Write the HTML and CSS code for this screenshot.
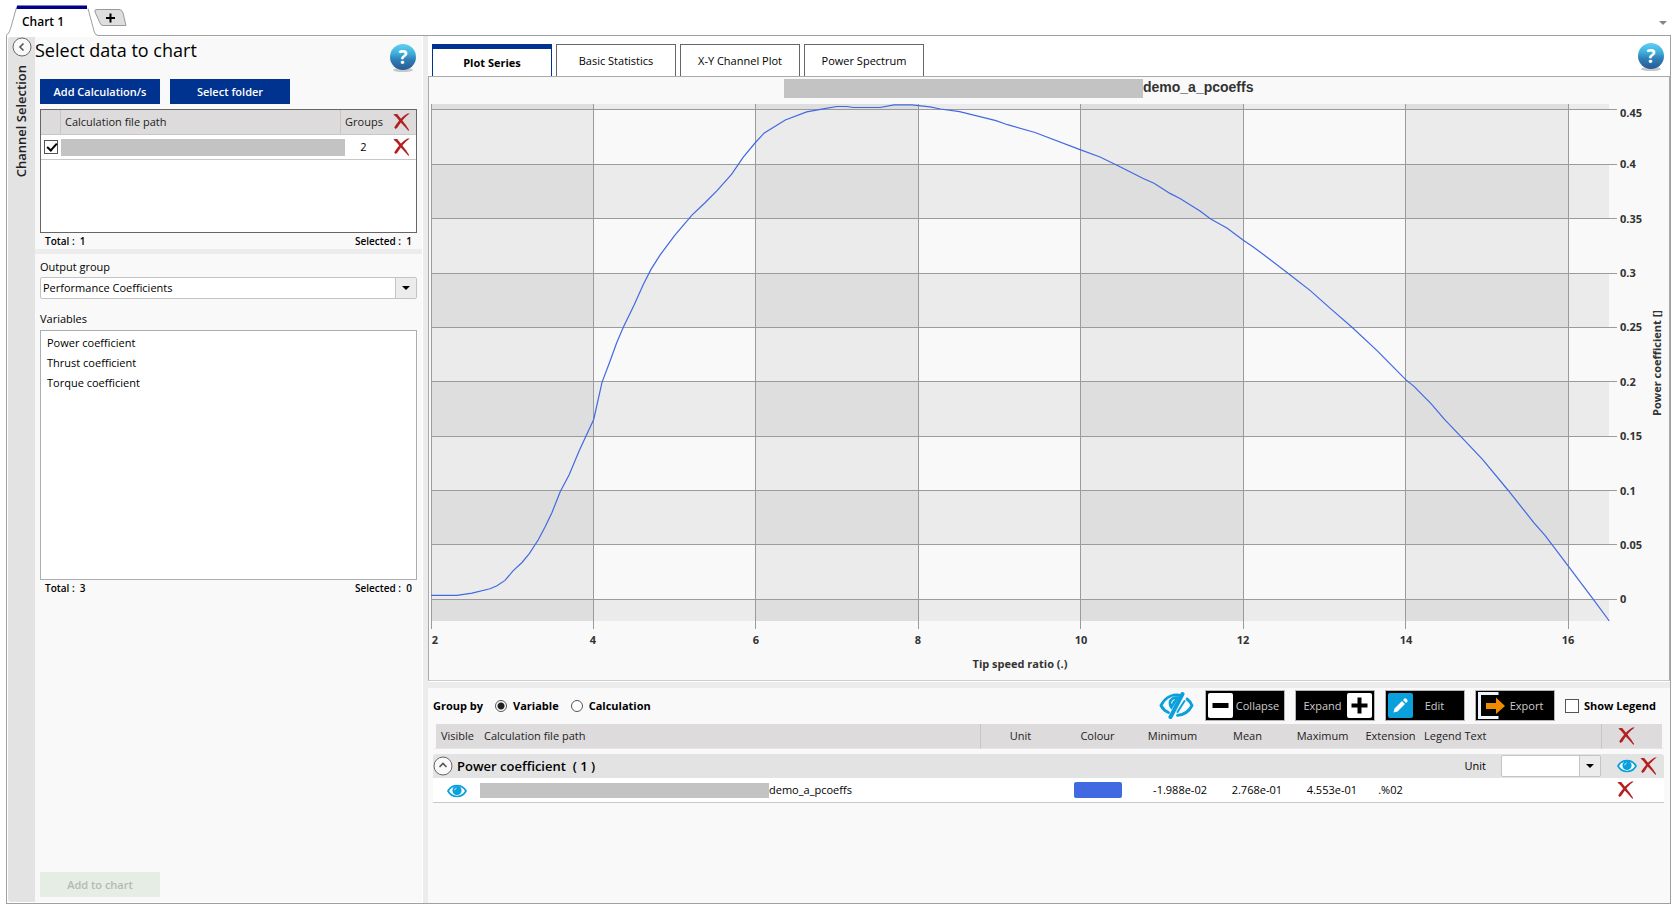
FILE: index.html
```html
<!DOCTYPE html>
<html lang="en">
<head>
<meta charset="utf-8">
<title>Chart 1</title>
<link rel="stylesheet" href="styles.css">
</head>
<body>
<svg class="defs" width="0" height="0" aria-hidden="true">
  <defs>
    <linearGradient id="helpFill" x1="0" y1="0" x2="0" y2="1">
      <stop offset="0" stop-color="#5fd0f3"/><stop offset=".35" stop-color="#3fb0dc"/>
      <stop offset=".6" stop-color="#2f7fb8"/><stop offset="1" stop-color="#285a90"/>
    </linearGradient>
    <symbol id="help" viewBox="0 0 28 28">
      <ellipse cx="14" cy="26" rx="10" ry="2" fill="#c4c8cc"/>
      <circle cx="14" cy="13" r="13" fill="url(#helpFill)"/>
      <text x="14" y="20" class="help-mark">?</text>
    </symbol>
    <symbol id="cross" viewBox="0 0 17 18">
      <path d="M.3 1.6 2.2.9 4.2 1 9 7c3 3.700 5 6.600 7 9.700l-.5 1.300C12.500 14.500 8.600 10.500 6 7.500 4 5 2.400 3 .3 1.600Z" fill="#b3201f"/>
      <path d="M16.800.4C12.500 3.500 8.300 8 4.300 14.800L2.600 16 1.200 14.500C5 8.500 10 3 14.700.6Z" fill="#b3201f"/>
    </symbol>
    <symbol id="eye" viewBox="0 0 20 14">
      <path d="M1 7C5-.3 15-.3 19 7 15 14.300 5 14.300 1 7Z" fill="#fff" stroke="#0aa0dc" stroke-width="1.700"/>
      <circle cx="10" cy="6.500" r="4.600" fill="#0aa0dc"/>
      <path d="M7.600 6.300A2.600 2.600 0 0 1 9.600 4" fill="none" stroke="#bfe8f8" stroke-width="1"/>
    </symbol>
    <symbol id="caret" viewBox="0 0 8 4"><path d="M0 0h8L4 4Z" fill="#000"/></symbol>
  </defs>
</svg>

<nav class="doc-tabs" aria-label="Charts">
  <button class="doc-tab" type="button">
    <svg width="92" height="31" viewBox="0 0 92 31" aria-hidden="true">
      <path d="M0 30.500C3 29 4 25 5 22L10.500 2.500Q11 .5 12.500 .5H79.500Q81 .5 82 3.500L88 26Q89 30.500 92 30.500V31H0Z" fill="#fff"/>
      <path d="M0 30.500C3 29 4 25 5 22L10.500 2.500M82 3.500L88 26Q89 30.500 92 30.500" fill="none" stroke="#a0a0a0"/>
      <path d="M11 .5H81V4H10.500Z" fill="#00008b"/>
    </svg>
    <span>Chart 1</span>
  </button>
  <button class="add-tab" type="button" aria-label="Add chart">
    <svg width="33" height="17" viewBox="0 0 33 17" aria-hidden="true">
      <path d="M3 .5H25Q28 .5 29 4L32 16.500H9Q7 16.500 6 14L1 3Q0 .5 3 .5Z" fill="#dedede" stroke="#999"/>
      <path d="M12 9H21M16.500 4.500V13.500" stroke="#000" stroke-width="2"/>
    </svg>
  </button>
  <button class="tab-list" type="button" aria-label="List charts">
    <svg width="8" height="4" viewBox="0 0 8 4" aria-hidden="true"><path d="M0 0h8L4 4Z" fill="#858585"/></svg>
  </button>
</nav>

<main class="frame">
  <aside class="rail">
    <button class="round" type="button" aria-label="Collapse channel selection">
      <svg width="20" height="20" viewBox="0 0 20 20" aria-hidden="true"><circle cx="10" cy="10" r="9" fill="#f9f9f9" stroke="#666"/><path d="M11.500 6.500 8 10l3.500 3.500" fill="none" stroke="#555" stroke-width="1.600"/></svg>
    </button>
    <span class="rail-label">Channel Selection</span>
  </aside>

  <section class="selection">
    <div class="files">
      <header class="files-head">
        <h1>Select data to chart</h1>
        <button class="help" type="button" aria-label="Help"><svg width="28" height="28"><use href="#help"/></svg></button>
      </header>
      <div class="actions">
        <button class="primary" type="button">Add Calculation/s</button>
        <button class="primary" type="button">Select folder</button>
      </div>
      <div class="file-box">
        <table class="file-table">
          <colgroup><col class="c-check"><col><col class="c-groups"><col class="c-del"></colgroup>
          <thead><tr>
            <th></th><th class="sep">Calculation file path</th><th class="sep mid">Groups</th>
            <th class="mid"><button class="icon" type="button" aria-label="Remove all"><svg width="17" height="18"><use href="#cross"/></svg></button></th>
          </tr></thead>
          <tbody><tr>
            <td class="mid"><input class="tick" type="checkbox" checked aria-label="Select file"></td>
            <td class="path"><div class="mask mask-file"></div></td><td class="mid">2</td>
            <td class="mid"><button class="icon" type="button" aria-label="Remove file"><svg width="17" height="18"><use href="#cross"/></svg></button></td>
          </tr></tbody>
        </table>
      </div>
      <div class="totals"><span>Total :&nbsp; 1</span><span>Selected :&nbsp; 1</span></div>
    </div>
    <div class="split-h"></div>
    <div class="vars">
      <label for="group">Output group</label>
      <div class="combo combo-wide">
        <select id="group"><option>Performance Coefficients</option></select>
        <span class="combo-arrow"><svg width="8" height="4"><use href="#caret"/></svg></span>
      </div>
      <h2>Variables</h2>
      <ul class="var-list">
        <li>Power coefficient</li><li>Thrust coefficient</li><li>Torque coefficient</li>
      </ul>
      <div class="totals"><span>Total :&nbsp; 3</span><span>Selected :&nbsp; 0</span></div>
      <button class="add" type="button" disabled>Add to chart</button>
    </div>
  </section>
  <div class="split-v"></div>

  <section class="work">
    <header class="plot-tabs">
      <button class="plot-tab active" type="button">Plot Series</button>
      <button class="plot-tab" type="button">Basic Statistics</button>
      <button class="plot-tab" type="button">X-Y Channel Plot</button>
      <button class="plot-tab" type="button">Power Spectrum</button>
      <button class="help" type="button" aria-label="Help"><svg width="28" height="28"><use href="#help"/></svg></button>
    </header>

    <div class="chart">
      <svg viewBox="429 77 1240 603" role="img" aria-label="Power coefficient against tip speed ratio">
        <g class="band">
          <path d="M431 104H593V621H431ZM756 104H918V621H756ZM1080 104H1243V621H1080ZM1405 104H1568V621H1405Z"/>
          <path d="M431 104H1609V109H431ZM431 164H1609V218H431ZM431 273H1609V327H431ZM431 381H1609V436H431ZM431 490H1609V544H431ZM431 599H1609V621H431Z"/>
        </g>
        <path class="grid" d="M431.500 104V629M593.500 104V629M755.500 104V629M918.500 104V629M1080.500 104V629M1243.500 104V629M1405.500 104V629M1568.500 104V629M431 109.500H1617M431 164.500H1617M431 218.500H1617M431 273.500H1617M431 327.500H1617M431 381.500H1617M431 436.500H1617M431 490.500H1617M431 544.500H1617M431 599.500H1617"/>
        <polyline class="curve" points="431,595.3 457,595.3 472,593.2 490,588.8 497,585.8 505,580.4 513,570.9 522,562.5 529.3,553.7 538.3,539.8 545,527 552,512.4 560.3,491.5 569.3,474.6 579.3,450.6 593.7,419.5 602,382.3 610,361.3 616.7,342.8 623.3,327.2 634,305.2 643.3,284.6 651,269.4 660,255.2 674.7,235.3 689,218.7 691.7,215.3 705.3,202.5 717.3,190.3 731.7,174.1 743.3,157.2 755,143 764.3,132.9 785.3,120 806.7,111.9 823.3,108.9 836.7,106.5 846.7,106.5 853.3,107.5 880,107.5 894,104.8 911.7,104.8 930,106.8 940.5,109 959.6,111.7 996,120.7 1007.5,124.7 1035,132.5 1080,149.6 1100,157 1120,166.7 1142.7,178.2 1154,183.2 1170,193.4 1180,198.4 1200,210.9 1210.7,219 1227.3,228.2 1243.3,240.3 1253.3,247.1 1266.7,256.9 1288.3,273.5 1310,290.4 1331.7,309.6 1352.3,327.5 1377.3,350.9 1405.7,379.6 1414,386.4 1431,403.6 1444.3,419.2 1460,435.7 1482.7,459.7 1508.3,490.5 1534,522.9 1545,535.4 1568.3,566.2 1593.3,599.3 1609.3,621"/>
        <rect x="784" y="79" width="359" height="19" fill="#c3c3c3"/>
        <text class="title" x="1143" y="92">demo_a_pcoeffs</text>
        <g class="ticks">
          <text x="1620" y="117">0.45</text><text x="1620" y="168">0.4</text><text x="1620" y="223">0.35</text><text x="1620" y="277">0.3</text><text x="1620" y="331">0.25</text><text x="1620" y="386">0.2</text><text x="1620" y="440">0.15</text><text x="1620" y="495">0.1</text><text x="1620" y="549">0.05</text><text x="1620" y="603">0</text>
        </g>
        <g class="ticks mid-ticks">
          <text x="435" y="644">2</text><text x="593" y="644">4</text><text x="756" y="644">6</text><text x="918" y="644">8</text><text x="1081" y="644">10</text><text x="1243" y="644">12</text><text x="1406" y="644">14</text><text x="1568" y="644">16</text>
          <text x="1020" y="668">Tip speed ratio (.)</text>
          <text transform="translate(1661 363) rotate(-90)">Power coefficient []</text>
        </g>
      </svg>
    </div>
    <div class="split-h split-work"></div>

    <div class="series">
      <div class="toolbar">
        <fieldset class="group-by">
          <legend>Group by</legend>
          <label><input type="radio" name="by" checked>Variable</label>
          <label><input type="radio" name="by">Calculation</label>
        </fieldset>
        <button class="icon hide-all" type="button" aria-label="Toggle visibility">
          <svg width="35" height="27" viewBox="0 0 35 27" aria-hidden="true">
            <path d="M9.500 20.500C6 19 3.500 16.500 2 13.500 7 3.500 15.500 2 22 3.500" fill="none" stroke="#0aa0dc" stroke-width="2.800" stroke-linecap="round"/>
            <path d="M28 7C30.500 8.800 32 11 33 13.500 30 19.500 25 22.800 18.500 23.300" fill="none" stroke="#0aa0dc" stroke-width="2.800" stroke-linecap="round"/>
            <path d="M10 8.500C9 12 10 15.500 12.500 17.500L20.500 4.500C16 3.500 12 5 10 8.500Z" fill="#0aa0dc"/>
            <path d="M23.500 2 11.500 25" stroke="#0aa0dc" stroke-width="4" stroke-linecap="round"/>
            <path d="M25.500 9 18.500 20" stroke="#0aa0dc" stroke-width="2" stroke-linecap="round"/>
            <path d="M12.500 11.500Q13 8.500 15.500 7.500" fill="none" stroke="#d5f0fa" stroke-width="1.300"/>
          </svg>
        </button>
        <button class="tool" type="button">
          <svg width="25" height="25" viewBox="0 0 25 25" aria-hidden="true"><rect width="25" height="25" rx="2" fill="#fff"/><path d="M4.500 12.500H20.500" stroke="#000" stroke-width="5"/></svg>
          <span>Collapse</span>
        </button>
        <button class="tool" type="button">
          <span>Expand</span>
          <svg width="25" height="25" viewBox="0 0 25 25" aria-hidden="true"><rect width="25" height="25" rx="2" fill="#fff"/><path d="M4.500 12.500H20.500M12.500 4.500V20.500" stroke="#000" stroke-width="4"/></svg>
        </button>
        <button class="tool tool-short" type="button">
          <svg width="25" height="25" viewBox="0 0 25 25" aria-hidden="true"><rect width="25" height="25" rx="2" fill="#0aa0dc"/><path d="M5.500 19.500 6.500 15.500 14 8 17 11 9.500 18.500ZM15 7 16.500 5.500Q17.500 5 18.500 6L19.300 7Q20 7.800 19.500 8.500L18 10Z" fill="#fff"/></svg>
          <span>Edit</span>
        </button>
        <button class="tool tool-short" type="button">
          <svg width="29" height="27" viewBox="0 0 29 27" aria-hidden="true"><path d="M20.500 1.500H1.500V25.500H20.500" fill="none" stroke="#eef4ff" stroke-width="3"/><path d="M8 11H18V5.500L27 14 18 22V17H8Z" fill="#f08a00"/></svg>
          <span>Export</span>
        </button>
        <label class="legend-toggle"><input class="tick" type="checkbox">Show Legend</label>
      </div>

      <table class="series-table">
        <colgroup><col class="s-vis"><col><col class="s-unit"><col class="s-num"><col class="s-num"><col class="s-num"><col class="s-num"><col class="s-ext"><col class="s-leg"><col class="s-del"></colgroup>
        <thead><tr>
          <th class="first">Visible</th><th>Calculation file path</th><th class="sep mid">Unit</th><th class="mid">Colour</th><th class="mid">Minimum</th><th class="mid">Mean</th><th class="mid">Maximum</th><th class="mid">Extension</th><th>Legend Text</th>
          <th class="sep last"><button class="icon" type="button" aria-label="Remove all series"><svg width="17" height="18"><use href="#cross"/></svg></button></th>
        </tr></thead>
        <tbody>
          <tr class="group">
            <td colspan="8"><div class="group-name">
              <button class="round" type="button" aria-label="Collapse group"><svg width="20" height="20" viewBox="0 0 20 20" aria-hidden="true"><circle cx="10" cy="10" r="9" fill="#f9f9f9" stroke="#666"/><path d="M6.500 11 10 7.500l3.500 3.500" fill="none" stroke="#555" stroke-width="1.600"/></svg></button>
              <span>Power coefficient &nbsp;( 1 )</span></div></td>
            <td><div class="group-unit"><label for="unit">Unit</label>
              <div class="combo combo-unit"><select id="unit"><option></option></select><span class="combo-arrow"><svg width="8" height="4"><use href="#caret"/></svg></span></div></div></td>
            <td><div class="group-icons">
              <button class="icon" type="button" aria-label="Show group"><svg width="20" height="14"><use href="#eye"/></svg></button>
              <button class="icon" type="button" aria-label="Remove group"><svg width="17" height="18"><use href="#cross"/></svg></button></div></td>
          </tr>
          <tr class="row">
            <td class="mid"><button class="icon" type="button" aria-label="Show series"><svg width="20" height="14"><use href="#eye"/></svg></button></td>
            <td class="path"><div class="series-path"><span class="mask mask-series"></span>demo_a_pcoeffs</div></td>
            <td></td><td class="mid"><span class="swatch"></span></td>
            <td class="num">-1.988e-02</td><td class="num">2.768e-01</td><td class="num">4.553e-01</td><td class="mid">.%02</td><td></td>
            <td class="last"><button class="icon" type="button" aria-label="Remove series"><svg width="17" height="18"><use href="#cross"/></svg></button></td>
          </tr>
        </tbody>
      </table>
    </div>
  </section>
</main>
</body>
</html>
```

FILE: styles.css
```css
* { box-sizing: border-box; }

html { height: 100%; overflow: hidden; }

body {
  margin: 0;
  height: 100%;
  padding: 0 5px 8px 6px;
  display: flex;
  flex-direction: column;
  overflow: hidden;
  background: #fff;
  color: #000;
  font: 11px/16px "Open Sans", "Noto Sans", sans-serif;
}

button, input, select { font: inherit; color: inherit; margin: 0; }
button { border: 0; padding: 0; background: none; }
svg { display: block; flex: none; }
h1, h2, ul { margin: 0; padding: 0; list-style: none; font-weight: 400; }
.defs { position: absolute; top: 0; left: 0; }
.icon { display: inline-block; vertical-align: middle; }

/* document tabs */
.doc-tabs { display: flex; align-items: flex-start; height: 35px; padding-top: 5px; flex: none; }
.doc-tab { position: relative; width: 92px; height: 31px; z-index: 1; font-weight: 600; font-size: 12px; }
.doc-tab svg { position: absolute; inset: 0; }
.doc-tab span { position: relative; display: block; padding: 2px 18px 0 0; }
.add-tab { margin: 4px 0 0 -4px; }
.tab-list { margin: 16px 4px 0 auto; }

.frame {
  flex: 1;
  min-height: 0;
  display: flex;
  border: 1px solid #a0a0a0;
}

/* collapsed rail */
.rail {
  width: 27px;
  margin: 1px 0 1px 1px;
  background: #e3e3e3;
  border-radius: 3px 0 0 3px;
  display: flex;
  flex-direction: column;
  align-items: center;
  gap: 8px;
  flex: none;
}
.rail-label { writing-mode: vertical-rl; transform: rotate(180deg); margin-right: 2px; font-size: 13px; font-weight: 600; color: #222; }

/* selection panel */
.selection { width: 387px; margin: 1px 1px 1px 0; flex: none; display: flex; flex-direction: column; background: #f9f9f9; }
.files { padding: 0 5px; height: 212px; display: flex; flex-direction: column; }
.files-head { display: flex; justify-content: space-between; height: 42px; }
.files-head h1 { font-size: 18px; line-height: 26px; margin-left: -5px; }
.files-head .help { margin: 7px 0 0; }
.help { align-self: flex-start; }
.help-mark { font: 700 19px "Open Sans", sans-serif; fill: #fff; text-anchor: middle; }
.actions { display: flex; gap: 10px; margin-bottom: 5px; }
.primary { width: 120px; height: 25px; background: #003290; color: #fff; font-weight: 600; }
.file-box { flex: 1; border: 1px solid #666; background: #fff; }
.totals { display: flex; justify-content: space-between; padding: 0 5px; font-size: 10px; font-weight: 600; }

table { width: 100%; table-layout: fixed; border-collapse: separate; border-spacing: 0; }
th, td { padding: 0; font-weight: 400; text-align: left; white-space: nowrap; height: 25px; }
th { background: #dddbdc; border-bottom: 1px solid #c8c8c8; color: #222; }
.mid { text-align: center; }
.sep { border-left: 1px solid #c6c6c6; }
.mid svg, .tick { margin: auto; }

.file-table th.sep:not(.mid) { padding-left: 4px; }
.file-table td { border-bottom: 1px solid #c8c8c8; }
.c-check { width: 19px; }
.c-groups { width: 47px; }
.c-del { width: 29px; }
.mask { background: #c3c3c3; }
.mask-file { height: 17px; margin-right: -5px; margin-left: 1px; }

.tick {
  appearance: none;
  display: block;
  width: 14px;
  height: 14px;
  border: 1px solid #555;
  background: #fff;
  flex: none;
}
.tick:checked::before {
  content: "";
  display: block;
  width: 4px;
  height: 8px;
  margin: 0 0 0 4px;
  border: solid #000;
  border-width: 0 2px 2px 0;
  transform: rotate(42deg);
}

.split-h { height: 5px; background: #ececec; flex: none; }
.split-v { width: 5px; background: #ececec; flex: none; }

.vars { flex: 1; padding: 5px 5px; display: flex; flex-direction: column; }
.combo { position: relative; height: 22px; }
.combo select {
  appearance: none;
  width: 100%;
  height: 100%;
  padding: 0 24px 0 2px;
  border: 1px solid #c4c4c4;
  border-radius: 2px;
  background: #fff;
}
.combo-arrow {
  position: absolute;
  inset: 1px 1px 1px auto;
  width: 21px;
  display: flex;
  align-items: center;
  justify-content: center;
  background: #ececec;
  border-left: 1px solid #c4c4c4;
  pointer-events: none;
}
.combo-wide { margin-top: 2px; }
.vars h2 { font-size: 11px; margin: 12px 0 3px; }
.var-list { height: 250px; border: 1px solid #abadb3; background: #fff; padding: 2px 6px; }
.var-list li { line-height: 20px; }
.add { margin-top: auto; width: 120px; height: 25px; background: #e5ede4; color: #b4bab2; font-weight: 600; }

/* work area */
.work { flex: 1; min-width: 0; display: flex; flex-direction: column; }
.plot-tabs { display: flex; gap: 4px; align-items: flex-end; height: 40px; padding: 0 5px 0 4px; flex: none; }
.plot-tab { width: 120px; height: 32px; border: 1px solid #666; border-bottom: 0; background: #fff; }
.plot-tab.active { border: 1px solid #003290; border-top-width: 5px; border-bottom: 0; font-weight: 700; }
.plot-tabs .help { margin: 7px 0 0 auto; }
.chart { flex: 1; min-height: 0; border: 1px solid #aaa; border-bottom-color: #ccc; background: #f9f9f9; }
.chart svg { width: 100%; height: 100%; }
.band { fill: #000; fill-opacity: .055; }
.grid { fill: none; stroke: #9b9b9b; }
.curve { fill: none; stroke: #4169e1; stroke-width: 1.2; }
.title { font: 700 14px "Liberation Sans", sans-serif; fill: #333; }
.ticks { font-size: 11px; font-weight: 700; fill: #333; }
.mid-ticks { text-anchor: middle; }
.split-work { border-top: 1px solid #fff; height: 7px; }

/* series list */
.series { min-height: 215px; padding: 2px 6px 0 5px; background: #f9f9f9; flex: none; }
.toolbar { display: flex; align-items: center; gap: 10px; height: 34px; padding: 0 3px 3px 0; }
.group-by { display: flex; align-items: center; gap: 12px; border: 0; padding: 0; margin: 0 auto 0 0; min-width: 0; font-weight: 700; }
.group-by legend { float: left; padding: 0; }
.group-by label { display: flex; align-items: center; gap: 6px; }
.group-by input {
  appearance: none;
  width: 12px;
  height: 12px;
  border: 1px solid #555;
  border-radius: 50%;
  background: #fff;
}
.group-by input:checked { background: radial-gradient(circle, #222 0 3px, #fff 4px); }
.tool {
  width: 80px;
  height: 31px;
  padding: 0 2px;
  border: 1px solid #b5b5b5;
  background: #000;
  color: #ccc;
  display: flex;
  align-items: center;
}
.tool span { flex: 1; text-align: center; }
.tool-short span { padding-right: 6px; }
.hide-all { margin-right: 1px; }
.legend-toggle { display: flex; align-items: center; gap: 5px; min-width: 96px; font-weight: 700; }
.legend-toggle .tick { margin: 0; }

.series-table th { border-bottom-color: #e6e4e5; }
.first { padding-left: 5px; border-left: 3px solid #f9f9f9; }
.series-table th.last { border-right: 2px solid #f9f9f9; }
.series-table th:nth-child(2) { padding-left: 4px; }
.series-table th:nth-child(9) { padding-left: 3px; }
.last { padding-left: 16px; }
.series-table tbody::before { content: ""; display: block; height: 5px; }
.group td { height: 24px; background: #e3e3e3; }
.group td:first-child { border-radius: 3px 0 0 0; }
.group td:last-child { border-radius: 0 3px 0 0; }
.row td { background: #fff; border-bottom: 1px solid #c8c8c8; }
.group-name { display: flex; align-items: center; gap: 4px; font-size: 13px; font-weight: 600; }
.group-unit { display: flex; align-items: center; justify-content: flex-end; gap: 15px; }
.combo-unit { width: 100px; }
.group-icons { display: flex; align-items: center; gap: 3px; padding-left: 16px; }
.series-path { display: flex; align-items: center; }
.mask-series { width: 289px; height: 15px; flex: none; }
.swatch { display: block; width: 48px; height: 16px; margin: auto; border-radius: 2px; background: #4169e1; }
.num { text-align: right; padding-right: 3px; }
.s-vis { width: 47px; }
.s-unit { width: 80px; }
.s-num { width: 75px; }
.s-ext { width: 61px; }
.s-leg { width: 180px; }
.s-del { width: 63px; }
```
